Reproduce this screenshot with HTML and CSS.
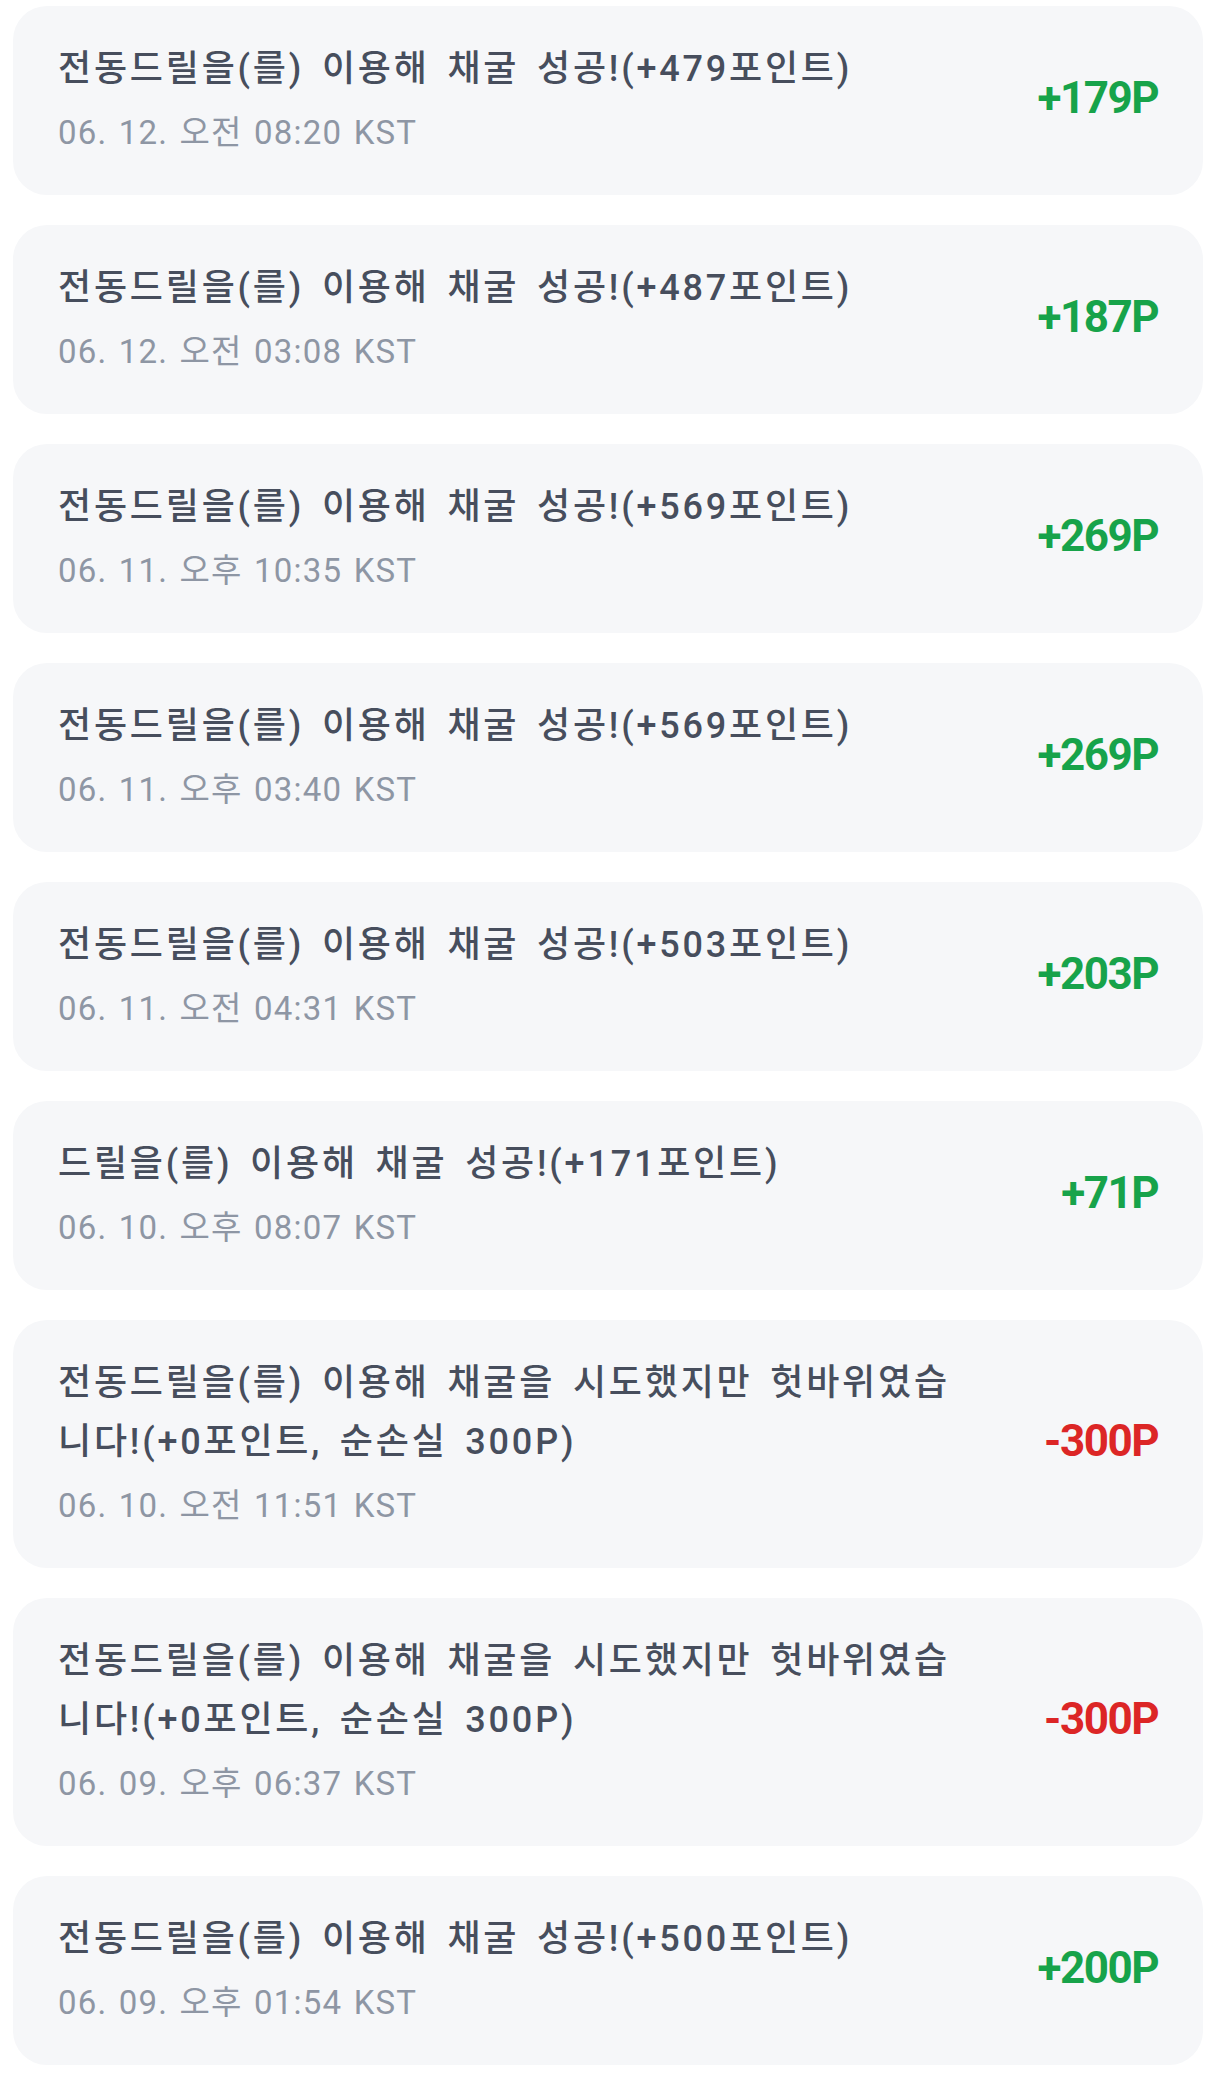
FILE: index.html
```html
<!DOCTYPE html>
<html lang="ko">
<head>
  <meta charset="UTF-8" />
  <title>포인트 내역</title>
  <link rel="stylesheet" href="styles.css">
</head>
<body>
  <ul class="history">
    <li class="item">
      <div class="info">
        <p class="title">전동드릴을(를) 이용해 채굴 성공!(+479포인트)</p>
        <p class="date">06. 12. 오전 08:20 KST</p>
      </div>
      <span class="amount plus">+179P</span>
    </li>
    <li class="item">
      <div class="info">
        <p class="title">전동드릴을(를) 이용해 채굴 성공!(+487포인트)</p>
        <p class="date">06. 12. 오전 03:08 KST</p>
      </div>
      <span class="amount plus">+187P</span>
    </li>
    <li class="item">
      <div class="info">
        <p class="title">전동드릴을(를) 이용해 채굴 성공!(+569포인트)</p>
        <p class="date">06. 11. 오후 10:35 KST</p>
      </div>
      <span class="amount plus">+269P</span>
    </li>
    <li class="item">
      <div class="info">
        <p class="title">전동드릴을(를) 이용해 채굴 성공!(+569포인트)</p>
        <p class="date">06. 11. 오후 03:40 KST</p>
      </div>
      <span class="amount plus">+269P</span>
    </li>
    <li class="item">
      <div class="info">
        <p class="title">전동드릴을(를) 이용해 채굴 성공!(+503포인트)</p>
        <p class="date">06. 11. 오전 04:31 KST</p>
      </div>
      <span class="amount plus">+203P</span>
    </li>
    <li class="item">
      <div class="info">
        <p class="title">드릴을(를) 이용해 채굴 성공!(+171포인트)</p>
        <p class="date">06. 10. 오후 08:07 KST</p>
      </div>
      <span class="amount plus">+71P</span>
    </li>
    <li class="item">
      <div class="info">
        <p class="title">전동드릴을(를) 이용해 채굴을 시도했지만 헛바위였습니다!(+0포인트, 순손실 300P)</p>
        <p class="date">06. 10. 오전 11:51 KST</p>
      </div>
      <span class="amount minus">-300P</span>
    </li>
    <li class="item">
      <div class="info">
        <p class="title">전동드릴을(를) 이용해 채굴을 시도했지만 헛바위였습니다!(+0포인트, 순손실 300P)</p>
        <p class="date">06. 09. 오후 06:37 KST</p>
      </div>
      <span class="amount minus">-300P</span>
    </li>
    <li class="item">
      <div class="info">
        <p class="title">전동드릴을(를) 이용해 채굴 성공!(+500포인트)</p>
        <p class="date">06. 09. 오후 01:54 KST</p>
      </div>
      <span class="amount plus">+200P</span>
    </li>
  </ul>
</body>
</html>
```

FILE: styles.css
```css
body { margin: 0; background: #fff; font-family: Roboto, "Noto Sans CJK KR", sans-serif; }
.history { list-style: none; margin: 0; padding: 6px 23px 0 13px; display: flex; flex-direction: column; gap: 30px; }
.item { display: flex; align-items: center; gap: 84px; background: #f6f7f9; border-radius: 34px;
        padding: 34px 45px 40px 45px; }
.info { flex: 1; min-width: 0; }
.title { margin: 0; font-size: 36px; line-height: 59px; font-weight: 500; color: #474e5d;
         letter-spacing: 2.8px; word-spacing: 6px; }
.date { margin: 12px 0 0; font-size: 33px; line-height: 44px; color: #8e96a4;
        letter-spacing: 1.2px; word-spacing: 2px; }
.amount { font-size: 44px; font-weight: 700; letter-spacing: -1.5px; white-space: nowrap; }
.amount.plus { color: #17a34a; }
.amount.minus { color: #dc2626; }
```
